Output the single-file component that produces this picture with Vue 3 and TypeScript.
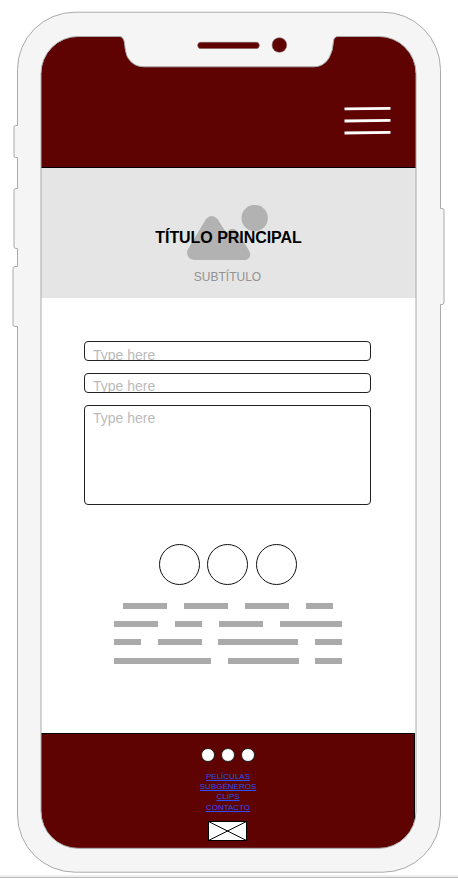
<script setup lang="ts">
interface Field {
  id: string
  tall: boolean
}

const fields: Field[] = [
  { id: 'first', tall: false },
  { id: 'second', tall: false },
  { id: 'message', tall: true },
]

// Word widths of each placeholder text line, in pixels
const textLines: number[][] = [
  [44, 44, 44, 27],
  [44, 27, 44, 62],
  [27, 44, 80, 27],
  [97, 71, 27],
]

const links: string[] = ['PELÍCULAS', 'SUBGÉNEROS', 'CLIPS', 'CONTACTO']
</script>

<template>
  <div class="stage">
    <main class="screen">
      <header class="topbar">
        <svg class="menu" width="48" height="30" viewBox="0 0 48 30">
          <path d="M1.500 3.900 47.500 3.300M1.500 16 47.500 15.300M1.500 28 47.500 27.300" stroke="#fff" stroke-width="2.8" />
        </svg>
      </header>

      <section class="hero">
        <svg class="picture" width="82" height="56" viewBox="187 205 82 56">
          <circle cx="254.7" cy="218" r="13.2" />
          <path
            d="M206 219 Q211.500 213 217.500 219 L226.500 233 Q231.500 225.500 237 231 L249 250.500 Q252.500 257.500 246 260 H194 Q185.500 258.500 187.500 250 Z"
          />
        </svg>
        <h1>TÍTULO PRINCIPAL</h1>
        <p>SUBTÍTULO</p>
      </section>

      <form class="form">
        <div v-for="field in fields" :key="field.id" class="field" :class="{ tall: field.tall }">
          Type here
        </div>
      </form>

      <div class="rings">
        <span v-for="n in 3" :key="n" class="ring"></span>
      </div>

      <div class="copy">
        <div v-for="(line, i) in textLines" :key="i" class="line">
          <span v-for="(w, j) in line" :key="j" class="word" :style="{ width: w + 'px' }"></span>
        </div>
      </div>

      <footer class="footer">
        <div class="dots">
          <span v-for="n in 3" :key="n" class="dot"></span>
        </div>
        <nav>
          <a v-for="link in links" :key="link" href="#">{{ link }}</a>
        </nav>
        <svg class="mail" width="39" height="20" viewBox="0 0 39 20">
          <rect x=".5" y=".5" width="38" height="19" fill="#fff" stroke="#000" />
          <path d="M.5.5 38.500 19.500M.5 19.500 38.500.5" stroke="#000" />
        </svg>
      </footer>
    </main>

    <svg class="frame" width="458" height="878" viewBox="0 0 458 878">
      <path
        class="bezel"
        fill-rule="evenodd"
        d="M75 12.200H383A57.500 57.500 0 0 1 440.500 69.500V208.500H442Q444 208.500 444 210.500V302.500Q444 304.500 442 304.500H440.500V815A57.500 57.500 0 0 1 383 872.200H75A57.500 57.500 0 0 1 17.500 815V326.500H15Q13 326.500 13 324.500V268.500Q13 266.500 15 266.500H17.500V248.500H16Q14 248.500 14 246.500V190.500Q14 188.500 16 188.500H17.500V157.500H15.500Q14 157.500 14 156V127Q14 125.500 15.500 125.500H17.500V69.500A57.500 57.500 0 0 1 75 12.200Z
           M78 36.500A37 37 0 0 0 41 73.500V811A37 37 0 0 0 78 848.300H379A37 37 0 0 0 416 811V73.500A37 37 0 0 0 379 36.500H338Q334 36.500 333.500 41Q333 51 329 58Q323.500 66.800 314 66.800H144Q133.500 66.800 128 58Q125.500 54 124.500 43Q123.500 36.500 119.500 36.500Z"
      />
      <rect class="slot" x="197.700" y="42.300" width="61.600" height="6.200" rx="3.100" />
      <circle class="slot" cx="279.400" cy="45" r="7.300" />
    </svg>
    <div class="baseline"></div>
  </div>
</template>

<style>
body {
  background: #fff;
}
</style>

<style scoped>
.stage {
  position: relative;
  box-sizing: border-box;
  width: 458px;
  height: 878px;
  padding: 36px 0 0 41px;
  overflow: hidden;
  font-family: 'Liberation Sans', Arial, sans-serif;
}

.screen {
  display: flex;
  flex-direction: column;
  width: 375px;
  height: 813px;
  background: #fff;
  border-radius: 38px;
  overflow: hidden;
}

.topbar {
  box-sizing: border-box;
  display: flex;
  justify-content: flex-end;
  height: 132px;
  padding: 69px 25px 0 0;
  background: #5e0202;
  border-bottom: 1px solid #000;
}

.menu {
  fill: none;
}

.hero {
  display: grid;
  justify-items: center;
  grid-template-rows: 37px 56px 36.500px;
  height: 129.500px;
  background: #e5e5e5;
}

.picture {
  grid-area: 2 / 1;
  margin-right: 2px;
  fill: #b2b2b2;
}

h1 {
  grid-area: 2 / 1;
  z-index: 1;
  margin: 24px 0 0;
  font-size: 16px;
  line-height: 18px;
  font-weight: 700;
  letter-spacing: -0.050px;
  color: #000;
  white-space: nowrap;
}

p {
  grid-area: 3 / 1;
  margin: 9px 2px 0 0;
  font-size: 12px;
  line-height: 15px;
  color: #929292;
}

.form {
  display: flex;
  flex-direction: column;
  gap: 12px;
  margin: 43.500px 45px 0 43px;
}

.field {
  box-sizing: border-box;
  height: 20px;
  padding: 5px 8px 0;
  border: 1px solid #222;
  border-radius: 4px;
  font-size: 14px;
  line-height: 16px;
  color: #bbb;
  overflow: hidden;
}

.field:not(:first-child) {
  padding-top: 4px;
}

.field.tall {
  height: 100px;
}

.rings {
  display: flex;
  justify-content: center;
  gap: 7.700px;
  margin: 39px 0 0 -1.400px;
}

.ring {
  box-sizing: border-box;
  width: 41px;
  height: 41px;
  border: 1px solid #111;
  border-radius: 50%;
}

.copy {
  display: flex;
  flex-direction: column;
  gap: 12px;
  margin: 18px 0 0;
}

.line {
  display: flex;
  justify-content: center;
  gap: 17px;
  padding-right: 2px;
}

.line:nth-child(n + 3) {
  padding-right: 1px;
  margin-left: 0.100px;
}

.line:last-child {
  margin-top: 1px;
}

.line:nth-child(n + 3) .word:not(:first-child) {
  margin-left: -0.300px;
}

.word {
  height: 6px;
  background: #aaa;
}

.footer {
  box-sizing: border-box;
  display: flex;
  flex-direction: column;
  align-items: center;
  width: 374px;
  height: 116px;
  margin-top: auto;
  padding-top: 14px;
  background: #5e0202;
  border-top: 1px solid #000;
  border-right: 1px solid #000;
}

.dots {
  display: flex;
  gap: 6px;
}

.dot {
  box-sizing: border-box;
  width: 14px;
  height: 14px;
  background: #fff;
  border: 0.500px solid #222;
  border-radius: 50%;
}

nav {
  display: flex;
  flex-direction: column;
  align-items: center;
  margin: 9.600px 0 0 1px;
}

nav a {
  font-size: 8px;
  line-height: 10.400px;
  color: #2a50f5;
  text-decoration: underline;
}

.mail {
  margin-top: 7.400px;
  fill: none;
}

.frame {
  position: absolute;
  inset: 0;
  pointer-events: none;
}

.bezel {
  fill: #f5f5f5;
  stroke: #aaa;
  stroke-width: 1;
}

.slot {
  fill: #5e0202;
  stroke: #806060;
  stroke-width: 0.600;
}

.baseline {
  position: absolute;
  left: 0;
  right: 0;
  bottom: 0;
  height: 2px;
  background: #eee;
  border-bottom: 1px solid #bbb;
}
</style>
